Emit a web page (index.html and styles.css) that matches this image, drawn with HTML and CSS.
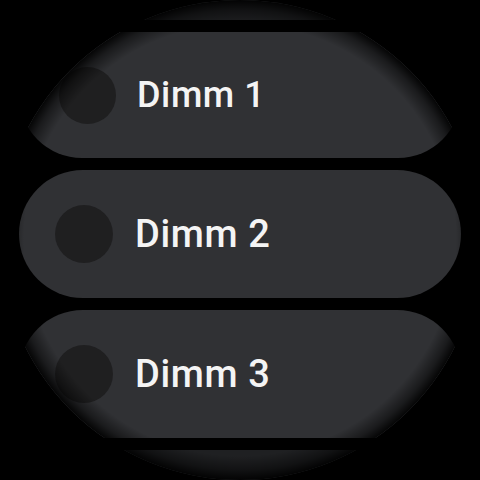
FILE: index.html
```html
<!DOCTYPE html>
<html>
<head>
<meta charset="utf-8">
<link rel="stylesheet" href="styles.css">
</head>
<body>
<div class="screen">
  <div class="list">
    <div class="chip ghost"></div>
    <div class="chip chip-small">
      <span class="icon"></span>
      <span class="label">Dimm 1</span>
    </div>
    <div class="chip">
      <span class="icon"></span>
      <span class="label">Dimm 2</span>
    </div>
    <div class="chip">
      <span class="icon"></span>
      <span class="label">Dimm 3</span>
    </div>
    <div class="chip ghost"></div>
  </div>
  <div class="vignette"></div>
</div>
</body>
</html>
```
FILE: styles.css
```css
html, body {
  margin: 0;
  padding: 0;
  background: #000;
}
.screen {
  width: 480px;
  height: 480px;
  border-radius: 50%;
  overflow: hidden;
  position: relative;
  background: #000;
}
.list {
  display: flex;
  flex-direction: column;
  gap: 12px;
  margin-top: -108px;
  padding: 0 19px;
}
.chip {
  height: 128px;
  flex: none;
  border-radius: 64px;
  background: #303134;
  display: flex;
  align-items: center;
  padding-left: 36px;
  gap: 22px;
}
.chip-small {
  height: 126px;
  padding-left: 40px;
  gap: 21px;
}
.ghost {
  background: #1f2022;
}
.icon {
  width: 58px;
  height: 58px;
  border-radius: 50%;
  background: #1f1f20;
  flex: none;
}
.chip-small .icon {
  width: 57px;
  height: 57px;
}
.label {
  font-family: Roboto, "Noto Sans", sans-serif;
  font-weight: 500;
  font-size: 38px;
  letter-spacing: 0.6px;
  color: #f4f4f4;
}
.chip-small .label {
  font-size: 36px;
}
.vignette {
  position: absolute;
  inset: 0;
  border-radius: 50%;
  background: radial-gradient(circle closest-side at 50% 50%, rgba(0,0,0,0) 90%, rgba(0,0,0,0.45) 96%, rgba(0,0,0,0.9) 100%);
  pointer-events: none;
}
```
